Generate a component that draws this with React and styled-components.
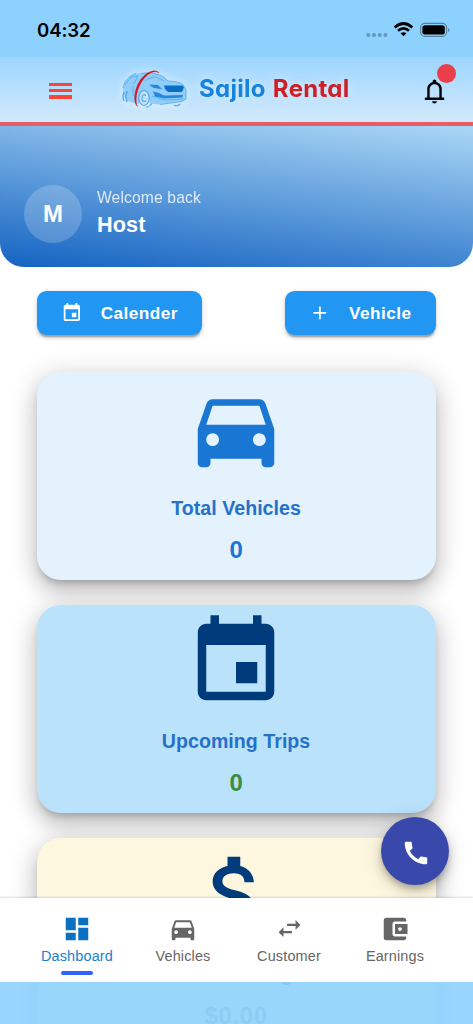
import React from 'react';
import styled, { createGlobalStyle } from 'styled-components';

const GlobalStyle = createGlobalStyle`
  * {
    box-sizing: border-box;
  }
  body {
    margin: 0;
    background: #fff;
    font-family: 'Liberation Sans', Arial, sans-serif;
  }
`;

const Screen = styled.div`
  position: relative;
  display: flex;
  flex-direction: column;
  width: 473px;
  height: 1024px;
  overflow: hidden;
  background: #fff;
`;

const StatusBar = styled.div`
  display: flex;
  flex: none;
  align-items: center;
  justify-content: space-between;
  height: 57px;
  padding: 3px 22px 0 37px;
  background: #8dd1ff;
`;

const Clock = styled.span`
  font-family: Inter, sans-serif;
  font-size: 18.6px;
  font-weight: 600;
  letter-spacing: -0.1px;
  color: #000;
`;

const AppBar = styled.header`
  display: flex;
  flex: none;
  align-items: center;
  height: 68.5px;
  padding: 0 25px 0 49px;
  background: linear-gradient(180deg, #9dd6ff 0%, #d2e9fb 100%);
  border-bottom: 4px solid #e65c67;
`;

const MenuButton = styled.div`
  display: flex;
  flex-direction: column;
  gap: 3px;
  width: 23px;
  margin-top: 3px;

  span {
    height: 3.4px;
    background: #fb4438;
  }
`;

const Logo = styled.div`
  display: flex;
  align-items: center;
  margin-left: 50px;
  filter: drop-shadow(0 0 5px rgba(255, 255, 255, 0.5));
`;

const Brand = styled.span`
  margin: -2px 0 0 12px;
  font-family: Inter, sans-serif;
  font-feature-settings: 'cv11';
  font-size: 24px;
  font-weight: 700;
  letter-spacing: 0.3px;
  word-spacing: 1px;
  white-space: nowrap;
  color: #1783da;

  b {
    font-weight: 700;
    color: #cf1f24;
  }
`;

const Bell = styled.div`
  position: relative;
  display: flex;
  margin: 4px -1px 0 auto;
`;

const Dot = styled.span`
  position: absolute;
  top: -13px;
  right: -7px;
  width: 19px;
  height: 19px;
  border-radius: 50%;
  background: #ea3e49;
`;

const Hero = styled.section`
  display: flex;
  flex: none;
  align-items: flex-end;
  gap: 15px;
  height: 141.5px;
  padding: 0 24px 24px;
  border-radius: 0 0 24px 24px;
  background: linear-gradient(186.7deg, #abd7f6 0%, #1463c2 100%);
`;

const Avatar = styled.div`
  display: flex;
  align-items: center;
  justify-content: center;
  width: 58px;
  height: 58px;
  border-radius: 50%;
  background: rgba(255, 255, 255, 0.2);
  font-size: 24px;
  font-weight: 700;
  color: #fff;
`;

const Greeting = styled.div`
  display: flex;
  flex-direction: column;
  height: 58px;
  padding-top: 2px;
  color: #fff;
`;

const Small = styled.span`
  font-size: 15.65px;
  line-height: 22px;
  letter-spacing: 0.14px;
  opacity: 0.8;
`;

const Name = styled.span`
  font-size: 21.7px;
  font-weight: 700;
  line-height: 31px;
  letter-spacing: 0.1px;
`;

const Actions = styled.div`
  display: flex;
  flex: none;
  justify-content: space-between;
  padding: 24px 37px 0 36.5px;
`;

const ActionButton = styled.button`
  display: flex;
  align-items: center;
  gap: 18px;
  height: 44px;
  padding: 0 24.5px;
  border: none;
  border-radius: 9.6px;
  background: #2196f3;
  box-shadow: 0 3.6px 1.2px -2.4px rgba(0, 0, 0, 0.2),
    0 2.4px 2.4px rgba(0, 0, 0, 0.14), 0 1.2px 6px rgba(0, 0, 0, 0.12);
  font-family: inherit;
  font-size: 17.2px;
  font-weight: 700;
  letter-spacing: 0.45px;
  color: #fff;
`;

const Cards = styled.main`
  display: flex;
  flex: none;
  flex-direction: column;
  gap: 25px;
  padding: 37px 37.4px 0 36.5px;
`;

const Card = styled.div`
  display: flex;
  flex-direction: column;
  align-items: center;
  height: 208px;
  padding-top: 6px;
  border-radius: 24px;
  background: ${(props) => props.$bg};
  box-shadow: 0 6px 7px -3px rgba(0, 0, 0, 0.2),
    0 12px 20px 1px rgba(0, 0, 0, 0.14), 0 4px 26px 5px rgba(0, 0, 0, 0.12);
`;

const CardTitle = styled.div`
  margin-top: 14px;
  font-size: 19.6px;
  font-weight: 700;
  line-height: 28px;
  letter-spacing: 0.03px;
  color: #2571c9;
`;

const CardValue = styled.div`
  margin-top: 13px;
  font-size: 24px;
  font-weight: 700;
  line-height: 30px;
  letter-spacing: ${(props) => (props.$faded ? '0.6px' : 0)};
  color: ${(props) => props.$color};
`;

const Fab = styled.button`
  position: absolute;
  right: 24.5px;
  bottom: 139px;
  display: flex;
  align-items: center;
  justify-content: center;
  width: 68px;
  height: 68px;
  padding: 3px 0 0 3px;
  border: none;
  border-radius: 50%;
  background: #3949ab;
  box-shadow: 0 4px 6px -1px rgba(0, 0, 0, 0.2),
    0 7px 12px rgba(0, 0, 0, 0.14), 0 1px 22px rgba(0, 0, 0, 0.12);
  color: #fff;
`;

const BottomNav = styled.nav`
  position: absolute;
  right: 0;
  bottom: 42px;
  left: 0;
  display: flex;
  height: 84.5px;
  padding: 0 25px 0 24px;
  background: #fff;
  box-shadow: 0 -1px 2px rgba(0, 0, 0, 0.14);
`;

const NavItem = styled.div`
  display: flex;
  flex: 1;
  flex-direction: column;
  align-items: center;
  padding-top: 16px;
  font-size: 14.44px;
  line-height: 18px;
  letter-spacing: 0.15px;
  color: ${(props) => (props.$active ? '#1a7fcd' : '#666')};

  &::after {
    content: '';
    width: 32px;
    height: 4px;
    margin-top: 6px;
    border-radius: 2px;
    background: ${(props) => (props.$active ? '#2f62ff' : 'transparent')};
  }
`;

const NavIcon = styled.div`
  display: flex;
  align-items: center;
  height: 30px;
  margin-bottom: 3px;
  color: ${(props) => (props.$active ? '#0a70c0' : '#666')};
`;

const SafeArea = styled.div`
  position: absolute;
  right: 0;
  bottom: 0;
  left: 0;
  height: 42px;
  background: rgba(141, 209, 255, 0.9);
`;

const paths = {
  car: 'M18.92 6.01C18.72 5.42 18.16 5 17.5 5h-11c-.66 0-1.21.42-1.42 1.01L3 12v8c0 .55.45 1 1 1h1c.55 0 1-.45 1-1v-1h12v1c0 .55.45 1 1 1h1c.55 0 1-.45 1-1v-8l-2.08-5.99zM6.5 16c-.83 0-1.5-.67-1.5-1.5S5.67 13 6.5 13s1.5.67 1.5 1.5S7.33 16 6.5 16zm11 0c-.83 0-1.5-.67-1.5-1.5s.67-1.5 1.5-1.5 1.5.67 1.5 1.5-.67 1.5-1.5 1.5zM5 11l1.5-4.5h11L19 11H5z',
  event: 'M17 12h-5v5h5v-5zM16 1v2H8V1H6v2H5c-1.11 0-1.99.9-1.99 2L3 19c0 1.1.89 2 2 2h14c1.1 0 2-.9 2-2V5c0-1.1-.9-2-2-2h-1V1h-2zm3 18H5V8h14v11z',
  money: 'M11.8 10.9c-2.27-.59-3-1.2-3-2.15 0-1.09 1.01-1.85 2.7-1.85 1.78 0 2.44.85 2.5 2.1h2.21c-.07-1.72-1.12-3.3-3.21-3.81V3h-3v2.16c-1.94.42-3.5 1.68-3.5 3.61 0 2.31 1.91 3.46 4.7 4.13 2.5.6 3 1.48 3 2.41 0 .69-.49 1.79-2.7 1.79-2.06 0-2.87-.92-2.98-2.1h-2.2c.12 2.19 1.76 3.42 3.68 3.83V21h3v-2.15c1.95-.37 3.5-1.5 3.5-3.55 0-2.84-2.43-3.81-4.7-4.4z',
  add: 'M19 13h-6v6h-2v-6H5v-2h6V5h2v6h6v2z',
  dashboard: 'M3 13h8V3H3v10zm0 8h8v-6H3v6zm10 0h8V11h-8v10zm0-18v6h8V3h-8z',
  swap: 'M6.99 11L3 15l3.99 4v-3H14v-2H6.99v-3zM21 9l-3.99-4v3H10v2h7.01v3L21 9z',
  wallet: 'M21 18v1c0 1.1-.9 2-2 2H5c-1.11 0-2-.9-2-2V5c0-1.1.89-2 2-2h14c1.1 0 2 .9 2 2v1h-9c-1.11 0-2 .9-2 2v8c0 1.1.89 2 2 2h9zm-9-2h10V8H12v8zm4-2.5c-.83 0-1.5-.67-1.5-1.5s.67-1.5 1.5-1.5 1.5.67 1.5 1.5-.67 1.5-1.5 1.5z',
  phone: 'M20.01 15.38c-1.23 0-2.42-.2-3.53-.56-.35-.12-.74-.03-1.01.24l-1.57 1.97c-2.83-1.35-5.48-3.9-6.89-6.83l1.95-1.66c.27-.28.35-.67.24-1.02-.37-1.11-.56-2.3-.56-3.53 0-.54-.45-.99-.99-.99H4.19C3.65 3 3 3.24 3 3.99 3 13.28 10.73 21 20.01 21c.71 0 .99-.63.99-1.18v-3.45c0-.54-.45-.99-.99-.99z',
  bell: 'M4 19v-2h2v-7c0-1.38.42-2.61 1.25-3.69C8.08 5.24 9.17 4.53 10.5 4.2v-.7c0-.42.15-.77.44-1.06.29-.29.64-.44 1.06-.44s.77.15 1.06.44c.29.29.44.64.44 1.06v.7c1.33.33 2.42 1.04 3.25 2.11C17.58 7.39 18 8.62 18 10v7h2v2H4zm8 3c-.55 0-1.02-.2-1.41-.59-.39-.39-.59-.86-.59-1.41h4c0 .55-.2 1.02-.59 1.41-.39.39-.86.59-1.41.59zm-4-5h8v-7c0-1.1-.39-2.04-1.17-2.83C14.04 6.39 13.1 6 12 6s-2.04.39-2.83 1.17C8.39 7.96 8 8.9 8 10v7z',
};

const Icon = ({ name, size }) => (
  <svg width={size} height={size} viewBox="0 0 24 24" fill="currentColor">
    <path d={paths[name]} />
  </svg>
);

const StatusIcons = () => (
  <svg width="86" height="20" viewBox="0 0 86 20">
    <g fill="#000" opacity=".28">
      <circle cx="3.3" cy="15" r="2" />
      <circle cx="9" cy="15" r="2" />
      <circle cx="14.7" cy="15" r="2" />
      <circle cx="20.4" cy="15" r="2" />
    </g>
    <g fill="none" stroke="#000" strokeWidth="2.7">
      <path d="M29.6 7.4Q38.5 -0.4 47.4 7.4" />
      <path d="M33 10.8Q38.5 6 44 10.8" />
    </g>
    <path d="M35.5 13.3Q38.5 11 41.5 13.3L38.5 16.2Z" />
    <rect x="55.6" y="3.4" width="26" height="13" rx="4.2" fill="none" stroke="#000" strokeOpacity=".4" strokeWidth="1.1" />
    <rect x="57.4" y="5.2" width="22.4" height="9.4" rx="2.6" />
    <path d="M83.2 7.9v4.2q1.3-.7 1.3-2.1t-1.3-2.1z" opacity=".45" />
  </svg>
);

const CarLogo = () => (
  <svg width="65" height="42" viewBox="0 0 65 42" fill="none">
    <path d="M1 20C2 13 8 7 14 5.5c6-1 14-1 21 .5l6 2.5 5 4.5c7 .5 12 1 15 3.5l3 5v9.5l-4 2.5-22 3-10-1c0-9-9-10-11-1l-1 2-11-4-3-4z" fill="#90cdfb" />
    <path d="M1 20C2 13 8 7 14 5.5M19 5.5c6-1 12-.5 17 1l5 2 5 4.5c7 .5 12 1 15 3.500l3 5v9.500l-4 2.500-22 3M3 17l6-8 7-1-4 8M23 13c3-3 7-4 11-4l8 4M11 18v10M28 18l12 3M30 28l12 4 19-1" stroke="#5aaeed" strokeWidth=".9" />
    <path d="M2 24q-2 5 0 9M5 23q-2 6 0 11" stroke="#4aa3e8" strokeWidth="1.2" />
    <ellipse cx="22" cy="30" rx="5.2" ry="7.5" fill="#bfe1fb" stroke="#4aa3e8" strokeWidth="1.1" />
    <path d="M24 27.5q-3.5-2-4 2.5t4 3M24 39.5q4-1 6-4M52 37q3 2 6-1" stroke="#4aa3e8" strokeWidth="1.1" />
    <path d="M42 17.5h18.5l1.500 2-2 4.500H46l-3-3z" fill="#0a6fc2" />
    <path d="M27 16.5l9 .5 4 4-8-1zM31 23.5l6 1.5 5 2.5 19-.5-1 2.5-18 1-9-2z" fill="#2588d8" />
    <path d="M37 5C33 0 24 4 18 12.5C12.500 21 10.500 34 15.500 38.500C12.500 33 14.500 22 19.500 14C25 5.500 32 1.500 37 5z" fill="#d3191d" stroke="#d3191d" strokeWidth=".4" />
  </svg>
);

const cards = [
  { icon: 'car', title: 'Total Vehicles', value: '0', bg: '#e3f2fd', iconColor: '#1976d2', color: '#1976d2' },
  { icon: 'event', title: 'Upcoming Trips', value: '0', bg: '#bbe2fb', iconColor: '#003c7c', color: '#388e3c' },
  { icon: 'money', title: 'Total Earnings', value: '$0.00', bg: '#fef7e0', iconColor: '#003c7c', color: '#a09a88', faded: true },
];

const IconBox = styled.div`
  display: flex;
  color: ${(props) => props.$color};
`;

const navItems = [
  { icon: 'dashboard', label: 'Dashboard', size: 30 },
  { icon: 'car', label: 'Vehicles', size: 30 },
  { icon: 'swap', label: 'Customer', size: 29 },
  { icon: 'wallet', label: 'Earnings', size: 30 },
];

export default function App() {
  return (
    <>
      <GlobalStyle />
      <Screen>
        <StatusBar>
          <Clock>04:32</Clock>
          <StatusIcons />
        </StatusBar>
        <AppBar>
          <MenuButton>
            <span />
            <span />
            <span />
          </MenuButton>
          <Logo>
            <CarLogo />
            <Brand>
              Sajilo <b>Rental</b>
            </Brand>
          </Logo>
          <Bell>
            <Icon name="bell" size={29} />
            <Dot />
          </Bell>
        </AppBar>
        <Hero>
          <Avatar>M</Avatar>
          <Greeting>
            <Small>Welcome back</Small>
            <Name>Host</Name>
          </Greeting>
        </Hero>
        <Actions>
          <ActionButton>
            <Icon name="event" size={21.7} />
            Calender
          </ActionButton>
          <ActionButton>
            <Icon name="add" size={21.7} />
            Vehicle
          </ActionButton>
        </Actions>
        <Cards>
          {cards.map((card) => (
            <Card key={card.title} $bg={card.bg}>
              <IconBox $color={card.iconColor}>
                <Icon name={card.icon} size={102} />
              </IconBox>
              <CardTitle>{card.title}</CardTitle>
              <CardValue $color={card.color} $faded={card.faded}>
                {card.value}
              </CardValue>
            </Card>
          ))}
        </Cards>
        <Fab>
          <Icon name="phone" size={30} />
        </Fab>
        <BottomNav>
          {navItems.map((item, index) => (
            <NavItem key={item.label} $active={index === 0}>
              <NavIcon $active={index === 0}>
                <Icon name={item.icon} size={item.size} />
              </NavIcon>
              {item.label}
            </NavItem>
          ))}
        </BottomNav>
        <SafeArea />
      </Screen>
    </>
  );
}
